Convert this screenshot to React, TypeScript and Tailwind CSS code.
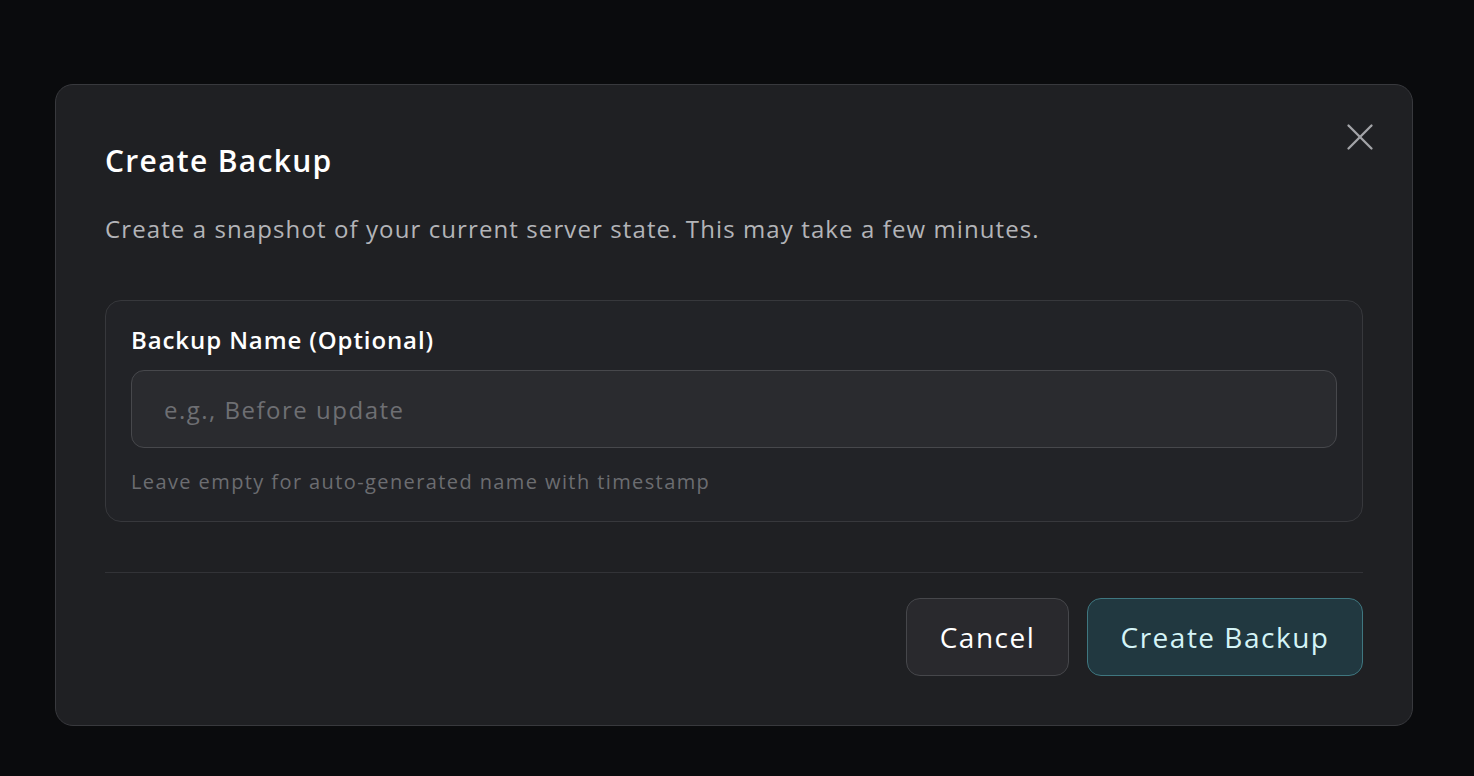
import { X } from 'lucide-react';

export default function App() {
  return (
    <div className="min-h-screen w-full bg-[#0a0b0d] pt-[84px] px-[55px] font-['Open_Sans',sans-serif]">
      <div className="relative w-[1358px] h-[642px] rounded-[18px] border border-[#38393d] bg-[#1f2023] px-[49px] pt-[56px] pb-[49px] flex flex-col">
        <button className="absolute right-[29px] top-[29px] text-[#a3a4a8]">
          <X className="w-[46px] h-[46px]" strokeWidth={1.2} />
        </button>

        <h2 className="text-[30px] leading-[40px] font-semibold text-white tracking-[1.3px]">Create Backup</h2>
        <p className="mt-[32px] text-[24px] leading-[32px] text-[#b3b4b8] tracking-[1.1px]">
          Create a snapshot of your current server state. This may take a few minutes.
        </p>

        {/* Name field */}
        <div className="mt-[55px] rounded-[16px] border border-[#37383c] bg-[#222327] px-[25px] pt-[23px] pb-[25px]">
          <label className="block text-[24px] leading-[32px] font-semibold text-white tracking-[0.9px]">
            Backup Name (Optional)
          </label>
          <input
            placeholder="e.g., Before update"
            className="mt-[14px] block w-full h-[78px] rounded-[13px] border border-[#47484c] bg-[#2a2b2f] px-[32px] text-[24px] tracking-[1.5px] text-white placeholder:text-[#6e6f73] outline-none"
          />
          <p className="mt-[20px] text-[20px] leading-[28px] text-[#6c6d71] tracking-[1.4px]">
            Leave empty for auto-generated name with timestamp
          </p>
        </div>

        <div className="mt-[50px] h-px bg-[#323337]" />

        <div className="mt-[25px] flex justify-end gap-[18px]">
          <button className="h-[78px] w-[163px] rounded-[14px] border border-[#46474b] bg-[#29292d] text-[28px] tracking-[1.5px] text-white">
            Cancel
          </button>
          <button className="h-[78px] w-[276px] rounded-[14px] border border-[#3f7780] bg-[#213840] text-[28px] tracking-[1.5px] text-[#d4f4f7]">
            Create Backup
          </button>
        </div>
      </div>
    </div>
  );
}
